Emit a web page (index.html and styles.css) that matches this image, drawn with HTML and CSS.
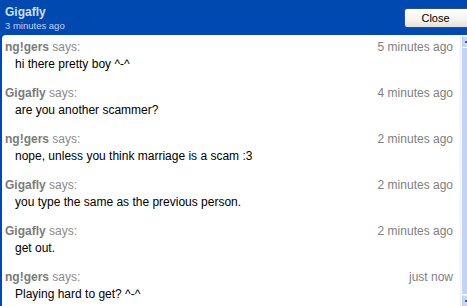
FILE: index.html
```html
<!DOCTYPE html>
<html>
<head>
<meta charset="utf-8">
<link rel="stylesheet" href="styles.css">
</head>
<body>
<div class="window">
  <header class="top">
    <div class="title">
      <div class="name">Gigafly</div>
      <div class="sub">3 minutes ago</div>
    </div>
    <button class="close">Close</button>
  </header>
  <div class="body">
    <div class="panel">
      <div class="msg">
        <div class="head"><span class="who"><b>ng!gers</b> says:</span><span class="time">5 minutes ago</span></div>
        <div class="text">hi there pretty boy ^-^</div>
      </div>
      <div class="msg">
        <div class="head"><span class="who"><b>Gigafly</b> says:</span><span class="time">4 minutes ago</span></div>
        <div class="text">are you another scammer?</div>
      </div>
      <div class="msg">
        <div class="head"><span class="who"><b>ng!gers</b> says:</span><span class="time">2 minutes ago</span></div>
        <div class="text">nope, unless you think marriage is a scam :3</div>
      </div>
      <div class="msg">
        <div class="head"><span class="who"><b>Gigafly</b> says:</span><span class="time">2 minutes ago</span></div>
        <div class="text">you type the same as the previous person.</div>
      </div>
      <div class="msg">
        <div class="head"><span class="who"><b>Gigafly</b> says:</span><span class="time">2 minutes ago</span></div>
        <div class="text">get out.</div>
      </div>
      <div class="msg">
        <div class="head"><span class="who"><b>ng!gers</b> says:</span><span class="time">just now</span></div>
        <div class="text">Playing hard to get? ^-^</div>
      </div>
    </div>
    <div class="scroll">
      <div class="arrow up"></div>
      <div class="track"></div>
      <div class="arrow down"></div>
    </div>
  </div>
</div>
</body>
</html>
```

FILE: styles.css
```css
html, body {
  margin: 0;
  padding: 0;
  width: 467px;
  height: 306px;
  overflow: hidden;
  background: #0049b0;
  font-family: "Liberation Sans", Arial, sans-serif;
  font-size: 12px;
}
.window {
  display: flex;
  flex-direction: column;
  height: 306px;
}
.top {
  height: 35px;
  display: flex;
  align-items: flex-start;
  justify-content: space-between;
  box-sizing: border-box;
  padding: 5px 0 0 5px;
}
.title .name {
  color: #d0e0ff;
  font-weight: bold;
  font-size: 12px;
  line-height: 14px;
}
.title .sub {
  color: #c0d4f8;
  font-size: 9.5px;
  line-height: 13px;
}
.close {
  margin-top: 3px;
  width: 72px;
  height: 20px;
  margin-right: -9px;
  font-family: "Liberation Sans", Arial, sans-serif;
  font-size: 11px;
  color: #000;
  border: 1px solid #2a4f8c;
  border-radius: 3px;
  background: linear-gradient(#ffffff, #f4f3ee 60%, #e3e1d8);
  padding: 0 9px 0 0;
}
.body {
  flex: 1;
  display: flex;
  min-height: 0;
  padding-left: 2px;
}
.panel {
  flex: 1;
  background: #fff;
  border-top-left-radius: 4px;
  padding: 5px 7px 0 3px;
  overflow: hidden;
}
.msg {
  margin-bottom: 15px;
}
.head {
  display: flex;
  justify-content: space-between;
  line-height: 14px;
  color: #8a8a8a;
}
.head b {
  color: #7b7b7b;
}
.time {
  color: #808080;
}
.text {
  margin-top: 3px;
  margin-left: 10px;
  line-height: 14px;
  color: #000;
}
.scroll {
  width: 5px;
  display: flex;
  flex-direction: column;
  background: #fff;
  padding-left: 1px;
  border-left: 1px solid #e8eefb;
}
.arrow {
  height: 10px;
  background: #c8d8fa;
  border-top: 1px solid #e6eefd;
  border-left: 1px solid #b4c8f0;
  position: relative;
}
.arrow::after {
  content: "";
  position: absolute;
  left: 2px;
  top: 4px;
  width: 3px;
  height: 2px;
  background: #4d6185;
}
.arrow.up { margin-top: 1px; }
.track {
  flex: 1;
  background: #c1d3fb;
  margin: 1px 0;
}
```
